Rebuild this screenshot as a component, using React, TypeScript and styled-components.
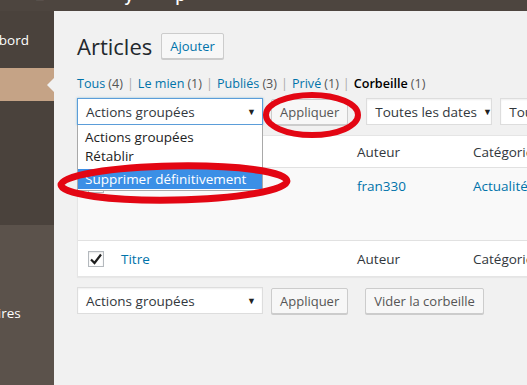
import React from 'react'
import styled, { createGlobalStyle } from 'styled-components'

const GlobalStyle = createGlobalStyle`
html, body {
    margin: 0;
    padding: 0;
    background: #f1f1f1;
}
body {
    font-family: "Open Sans", "Noto Sans", sans-serif;
    font-size: 13px;
    color: #444;
}
* {
    box-sizing: border-box;
}
`

const Page = styled.div`
position: relative;
width: 527px;
height: 385px;
display: flex;
flex-direction: column;
overflow: hidden;
`

const TopBar = styled.div`
height: 11px;
flex-shrink: 0;
background: #4d453f;
overflow: hidden;
display: flex;
align-items: flex-end;
`

const TopGlyph = styled.span<{ $left: number }>`
color: #fff;
font-size: 16px;
line-height: 16px;
margin-bottom: 8px;
margin-left: ${p => p.$left}px;
font-weight: 600;
`

const Body = styled.div`
flex: 1;
display: flex;
min-height: 0;
`

const Sidebar = styled.div`
width: 54px;
flex-shrink: 0;
background: #4a423c;
display: flex;
flex-direction: column;
overflow: hidden;
`

const SideItem = styled.div<{ $active?: boolean; $height: number }>`
position: relative;
height: ${p => p.$height}px;
display: flex;
align-items: center;
white-space: nowrap;
background: ${p => (p.$active ? '#c5a386' : 'transparent')};
color: #fff;
font-size: 13.5px;
${p => p.$active && `
&::after {
    content: '';
    position: absolute;
    right: 0;
    top: 50%;
    margin-top: -7px;
    border: 7px solid transparent;
    border-right-color: #f1f1f1;
}
`}
`

const SideLower = styled.div`
flex: 1;
background: #5b524b;
display: flex;
flex-direction: column;
padding-top: 71px;
`

const SideLabel = styled.span<{ $offset: number }>`
margin-left: ${p => p.$offset}px;
`

const Main = styled.div`
flex: 1;
position: relative;
padding: 21px 0 0 23px;
overflow: hidden;
`

const HeadingRow = styled.div`
display: flex;
align-items: center;
gap: 9px;
height: 28px;
`

const Title = styled.h1`
margin: 0;
font-size: 22px;
font-weight: 400;
color: #23282d;
`

const Button = styled.button<{ $primaryText?: boolean }>`
height: 26px;
padding: 0 8px;
font-family: inherit;
font-size: 13px;
color: ${p => (p.$primaryText ? '#0073aa' : '#555')};
background: #f7f7f7;
border: 1px solid #cccccc;
border-radius: 2px;
box-shadow: 0 1px 0 #cccccc;
white-space: nowrap;
flex-shrink: 0;
`

const Filters = styled.div`
margin-top: 15px;
display: flex;
align-items: center;
white-space: nowrap;
font-size: 12.6px;
`

const FilterLink = styled.span<{ $current?: boolean }>`
color: ${p => (p.$current ? '#000' : '#0073aa')};
font-weight: ${p => (p.$current ? 600 : 400)};
`

const Count = styled.span`
color: #555;
margin-left: 3px;
`

const Sep = styled.span`
color: #aaa;
margin: 0 4px;
`

const Toolbar = styled.div<{ $top: number }>`
position: relative;
margin-top: ${p => p.$top}px;
display: flex;
align-items: center;
gap: 8px;
height: 27px;
`

const SelectBox = styled.div<{ $width: number; $focused?: boolean }>`
position: relative;
width: ${p => p.$width}px;
height: 27px;
flex-shrink: 0;
display: flex;
align-items: center;
justify-content: space-between;
padding: 0 6px 0 8px;
background: #fff;
border: 1px solid ${p => (p.$focused ? '#5b9dd9' : '#dddddd')};
box-shadow: ${p => (p.$focused ? '0 0 2px rgba(30,140,190,0.5)' : 'inset 0 1px 2px rgba(0,0,0,0.07)')};
color: #32373c;
font-size: 13.5px;
white-space: nowrap;
`

const Arrow = styled.span`
font-size: 9px;
color: #222;
margin-left: 6px;
`

const DropList = styled.ul`
position: absolute;
left: -1px;
top: 26px;
width: 186px;
margin: 0;
padding: 3px 0 1px;
list-style: none;
background: #fff;
border: 1px solid #a9a9a9;
border-top: none;
z-index: 5;
`

const DropItem = styled.li<{ $selected?: boolean }>`
height: ${p => (p.$selected ? 20 : 19)}px;
line-height: ${p => (p.$selected ? 20 : 19)}px;
margin-top: ${p => (p.$selected ? 3 : 0)}px;
padding-left: 7px;
font-size: 13.5px;
color: ${p => (p.$selected ? '#fff' : '#222')};
background: ${p => (p.$selected ? '#3b8fe6' : 'transparent')};
`

const Table = styled.div`
margin-top: 10px;
width: 520px;
background: #fff;
border: 1px solid #e5e5e5;
box-shadow: 0 1px 1px rgba(0,0,0,0.04);
`

const Row = styled.div<{ $height: number; $alt?: boolean; $bordered?: boolean }>`
height: ${p => p.$height}px;
display: grid;
grid-template-columns: 33px 236px 116px 1fr;
align-items: ${p => (p.$alt ? 'start' : 'center')};
padding-top: ${p => (p.$alt ? '9px' : '0')};
background: ${p => (p.$alt ? '#f9f9f9' : '#fff')};
border-top: ${p => (p.$bordered ? '1px solid #e1e1e1' : 'none')};
`

const Cell = styled.div<{ $link?: boolean }>`
padding-left: 10px;
color: ${p => (p.$link ? '#0073aa' : '#32373c')};
font-size: 13.5px;
white-space: nowrap;
`

const CheckCell = styled.div`
padding-left: 10px;
display: flex;
align-items: center;
`

const Check = styled.span`
width: 16px;
height: 16px;
border: 1px solid #b4b9be;
background: #fff;
box-shadow: inset 0 1px 2px rgba(0,0,0,0.1);
display: flex;
align-items: center;
justify-content: center;
`

const Overlay = styled.svg`
position: absolute;
left: 0;
top: 0;
pointer-events: none;
z-index: 10;
`

const CheckIcon = () => (
    <svg width="14" height="14" viewBox="0 0 14 14">
        <path d="M2 7.5 L5.5 11 L12 2.5" fill="none" stroke="#1e1e1e" strokeWidth="2.2" />
    </svg>
)

const filters = [
    { label: 'Tous', count: 4 },
    { label: 'Le mien', count: 1 },
    { label: 'Publiés', count: 3 },
    { label: 'Privé', count: 1 },
    { label: 'Corbeille', count: 1, current: true },
]

const App: React.FC = () => {
    return (
        <Page>
            <GlobalStyle />
            <TopBar>
                <TopGlyph $left={35}>■</TopGlyph>
                <TopGlyph $left={80}>y</TopGlyph>
                <TopGlyph $left={42}>p</TopGlyph>
            </TopBar>
            <Body>
                <Sidebar>
                    <SideItem $height={57}>
                        <SideLabel $offset={-74}>Tableau de bord</SideLabel>
                    </SideItem>
                    <SideItem $height={33} $active />
                    <SideItem $height={124} />
                    <SideLower>
                        <SideItem $height={34}>
                            <SideLabel $offset={-72}>Commentaires</SideLabel>
                        </SideItem>
                    </SideLower>
                </Sidebar>
                <Main>
                    <HeadingRow>
                        <Title>Articles</Title>
                        <Button $primaryText>Ajouter</Button>
                    </HeadingRow>
                    <Filters>
                        {filters.map((f, i) => (
                            <React.Fragment key={f.label}>
                                {i > 0 && <Sep>|</Sep>}
                                <FilterLink $current={f.current}>{f.label}</FilterLink>
                                <Count>({f.count})</Count>
                            </React.Fragment>
                        ))}
                    </Filters>
                    <Toolbar $top={6}>
                        <SelectBox $width={186} $focused>
                            Actions groupées<Arrow>▼</Arrow>
                            <DropList>
                                <DropItem>Actions groupées</DropItem>
                                <DropItem>Rétablir</DropItem>
                                <DropItem $selected>Supprimer définitivement</DropItem>
                            </DropList>
                        </SelectBox>
                        <Button>Appliquer</Button>
                        <SelectBox $width={126} style={{ marginLeft: 10 }}>
                            Toutes les dates<Arrow>▼</Arrow>
                        </SelectBox>
                        <SelectBox $width={126}>
                            Toutes les catégories<Arrow>▼</Arrow>
                        </SelectBox>
                    </Toolbar>
                    <Table>
                        <Row $height={31}>
                            <CheckCell />
                            <Cell />
                            <Cell>Auteur</Cell>
                            <Cell>Catégories</Cell>
                        </Row>
                        <Row $height={73} $alt $bordered>
                            <CheckCell>
                                <Check />
                            </CheckCell>
                            <Cell $link>Essai</Cell>
                            <Cell $link>fran330</Cell>
                            <Cell $link>Actualités</Cell>
                        </Row>
                        <Row $height={36} $bordered>
                            <CheckCell>
                                <Check>
                                    <CheckIcon />
                                </Check>
                            </CheckCell>
                            <Cell $link>Titre</Cell>
                            <Cell>Auteur</Cell>
                            <Cell>Catégories</Cell>
                        </Row>
                    </Table>
                    <Toolbar $top={10}>
                        <SelectBox $width={186}>
                            Actions groupées<Arrow>▼</Arrow>
                        </SelectBox>
                        <Button>Appliquer</Button>
                        <Button style={{ marginLeft: 9 }}>Vider la corbeille</Button>
                    </Toolbar>
                </Main>
            </Body>
            <Overlay width="527" height="385" viewBox="0 0 527 385">
                <ellipse cx="312" cy="115" rx="46" ry="20" fill="none" stroke="#e30613" strokeWidth="6" />
                <ellipse cx="174" cy="183" rx="113" ry="17" fill="none" stroke="#e30613" strokeWidth="7" transform="rotate(-1 174 183)" />
            </Overlay>
        </Page>
    )
}

export default App
